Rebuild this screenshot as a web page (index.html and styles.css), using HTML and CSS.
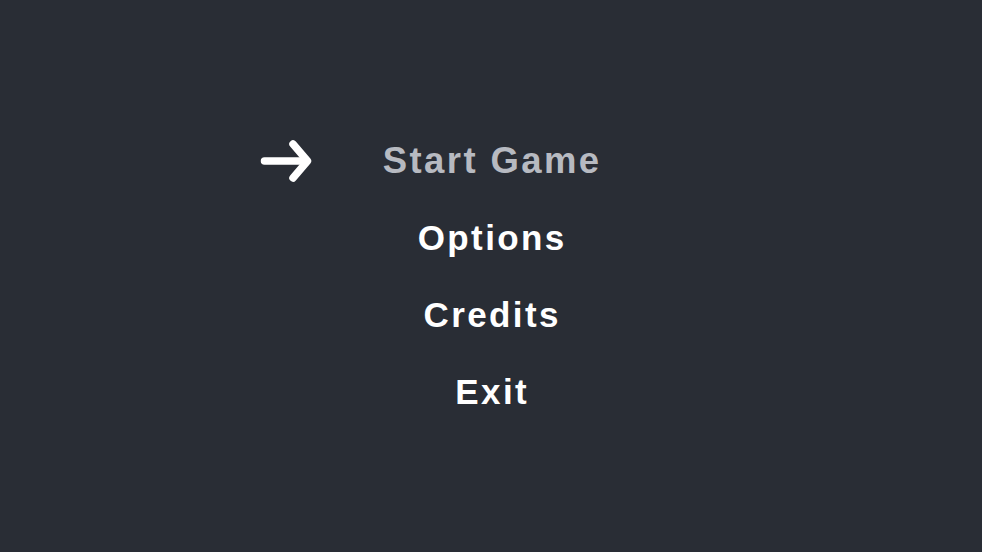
FILE: index.html
```html
<!DOCTYPE html>
<html lang="en">
<head>
<meta charset="utf-8">
<title>Main Menu</title>
<link rel="stylesheet" href="styles.css">
</head>
<body>
<main class="screen">
  <nav class="menu">
    <div class="item item-selected">
      <svg class="cursor" width="56" height="46" viewBox="0 0 56 46" aria-hidden="true">
        <line x1="6.5" y1="23" x2="47" y2="23" />
        <polyline points="35,6 49.5,23 35,40" />
      </svg>
      <span class="label">Start Game</span>
    </div>
    <div class="item"><span class="label">Options</span></div>
    <div class="item"><span class="label">Credits</span></div>
    <div class="item"><span class="label">Exit</span></div>
  </nav>
</main>
</body>
</html>
```
FILE: styles.css
```css
html, body {
  margin: 0;
  padding: 0;
  height: 100%;
}
body {
  background: #292d35;
  font-family: "Liberation Sans", Arial, sans-serif;
}
.screen {
  height: 100vh;
  display: flex;
  align-items: center;
  justify-content: center;
}
.menu {
  display: flex;
  flex-direction: column;
  align-items: center;
  gap: 37px;
}
.item {
  position: relative;
  height: 40px;
  line-height: 40px;
  font-size: 35px;
  font-weight: bold;
  letter-spacing: 2.4px;
  color: #ffffff;
  white-space: nowrap;
  margin-right: -2.4px;
}
.item-selected {
  font-size: 36.5px;
  color: #b7bac1;
}
.cursor {
  position: absolute;
  right: calc(100% + 69px);
  top: -3px;
  fill: none;
  stroke: #ffffff;
  stroke-width: 7.5;
  stroke-linecap: round;
  stroke-linejoin: round;
}
```
